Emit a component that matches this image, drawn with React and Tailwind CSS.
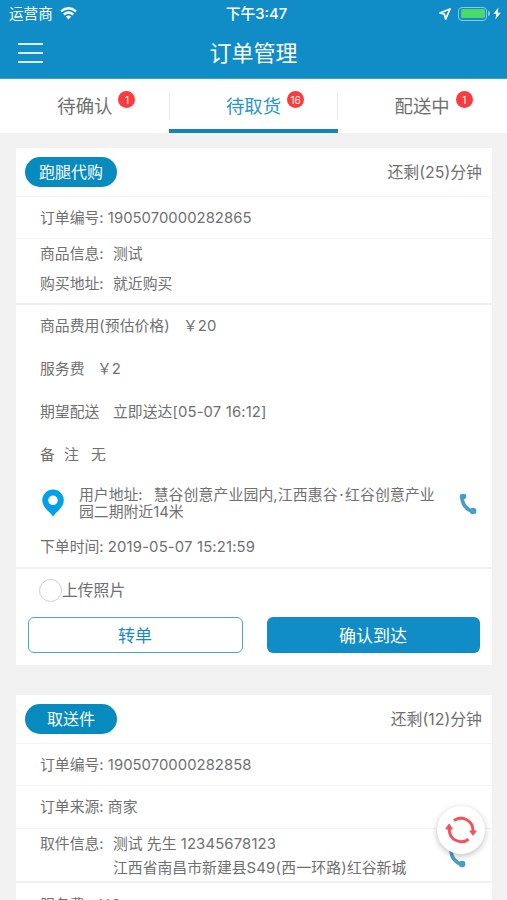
import React from "react";

const PhoneIcon = ({ className = "" }) => (
  <svg className={className} width="18" height="22" viewBox="0 0 18 22" fill="none">
    <path d="M3 4.5C3.3 11 7 16 13.5 18.6" stroke="#4a9dc4" strokeWidth="3.8" />
    <rect x=".8" y=".8" width="6.4" height="5.4" rx="2" transform="rotate(-6 4 3.5)" fill="#4a9dc4" />
    <circle cx="14.1" cy="18" r="3.3" fill="#4a9dc4" />
    <path d="M9.6 18 14 21.3 15 18Z" fill="#4a9dc4" />
  </svg>
);

const Tab = ({ label, count, active }) => (
  <div
    className={
      "relative flex flex-1 items-center justify-center border-b-4 pt-[5px] " +
      (active ? "border-[#1684b7] text-[#2b96c9]" : "border-transparent")
    }
  >
    <span className="relative text-[18.4px]">
      {label}
      <span className="absolute -right-[23px] -top-[6px] flex h-[17px] w-[17px] items-center justify-center rounded-full bg-[#fb3b3e] text-[10px] text-white">
        {count}
      </span>
    </span>
  </div>
);

const Head = ({ title, minutes }) => (
  <div className="flex h-[49px] items-center justify-between border-b border-[#f4f4f4] pl-[9px] pr-[10px]">
    <span className="flex h-[30px] w-[92px] items-center justify-center rounded-full bg-[#078bbf] text-[16px] text-white">
      {title}
    </span>
    <span className="pt-px text-[15.9px]">还剩({minutes})分钟</span>
  </div>
);

const Row = ({ className = "", children }) => (
  <div className={"flex items-center whitespace-pre pl-6 pt-px " + className}>{children}</div>
);

export default function App() {
  return (
    <div className="relative flex h-[900px] w-[507px] flex-col overflow-hidden bg-[#f2f2f2] font-['Inter','Noto_Sans_CJK_SC',sans-serif] text-[14.85px] font-normal leading-none text-[#707070]">
      <header className="h-[79px] shrink-0 border-b border-[#3ba0cf] bg-[#108cc6] text-white">
        <div className="grid h-[27px] grid-cols-3 items-center">
          <div className="flex items-center gap-[7px] pl-[9px] pt-px text-[14.6px]">
            运营商
            <svg className="-mt-px" width="17" height="13" viewBox="0 0 17 13" fill="none" stroke="white" strokeWidth="2.3">
              <path d="M1 4.4Q8.5-1.9 16 4.4" />
              <path d="M3.8 7.5Q8.5 3.5 13.2 7.5" />
              <path d="M8.5 12.4 5.8 9.5Q8.5 7.4 11.2 9.5Z" fill="white" stroke="none" />
            </svg>
          </div>
          <div className="pl-[6px] pt-[2px] text-center text-[14.8px] font-medium">下午3:47</div>
          <div className="flex items-center justify-end pr-[6px]">
            <svg width="12" height="12" viewBox="0 0 12 12" fill="none" stroke="white" strokeWidth="1.8" strokeLinejoin="round">
              <path d="M1 5 11 1 6.7 11 5.4 6.2Z" />
            </svg>
            <span className="ml-[7px] h-[14px] w-[29px] rounded-[4px] border border-[#8bc9e5] p-[1.5px]">
              <span className="block h-full rounded-[1.5px] bg-[#4cd964]" />
            </span>
            <span className="ml-[1px] h-[5px] w-[2px] rounded-r bg-[#8bc9e5]" />
            <svg className="ml-[3px]" width="8" height="13" viewBox="0 0 8 13" fill="white">
              <path d="M5.4.5.3 7h3L2.4 12.5 7.8 5.7H4.7Z" />
            </svg>
          </div>
        </div>
        <div className="grid h-[51px] grid-cols-3 items-center">
          <div className="ml-[18px] flex w-[25px] flex-col gap-[7px]">
            <span className="h-[2px] bg-white/85" />
            <span className="h-[2px] bg-white/85" />
            <span className="h-[2px] bg-white/85" />
          </div>
          <div className="text-center text-[22px]">订单管理</div>
        </div>
      </header>

      <nav className="flex h-[54px] shrink-0 bg-white">
        <Tab label="待确认" count="1" />
        <span className="-mx-px mt-[13px] h-[28px] w-px bg-[#ededed]" />
        <Tab label="待取货" count="16" active />
        <span className="-mx-px mt-[13px] h-[28px] w-px bg-[#ededed]" />
        <Tab label="配送中" count="1" />
      </nav>

      <main className="mt-[15px] flex flex-col gap-[30px] pl-4 pr-[15px]">
        <section className="h-[517px] shrink-0 bg-white">
          <Head title="跑腿代购" minutes="25" />
          <Row className="h-[42px] border-b border-[#f4f4f4]">订单编号: <span className="tracking-[0.04px]">1905070000282865</span></Row>
          <div className="flex h-[66px] flex-col border-b-2 border-[#f0f0f0]">
            <Row className="h-[30px]">
              <span className="w-[73px]">商品信息:</span>测试
            </Row>
            <Row className="h-[30px]">
              <span className="w-[73px]">购买地址:</span>就近购买
            </Row>
          </div>
          <Row className="h-[42px]">
            <span className="w-[143px]">商品费用(预估价格)</span>￥20
          </Row>
          <Row className="h-[43px]">
            <span className="w-[57px]">服务费</span>￥2
          </Row>
          <Row className="h-[43px]">
            <span className="w-[73px]">期望配送</span>
            <span>立即送达<span className="tracking-[0.15px]">[05-07 16:12]</span></span>
          </Row>
          <Row className="h-[43px]">
            <span className="w-6">备</span>
            <span className="w-[27px]">注</span>无
          </Row>
          <div className="flex h-[56px] items-center pl-[26px] pr-[15px]">
            <svg className="-mt-[2px]" width="22" height="28" viewBox="0 0 22 28">
              <path fillRule="evenodd" fill="#02a0e9" d="M11 .5A10.8 10.8 0 0 0 .2 11.3C.2 18.4 7.6 22.7 11 27.4 14.4 22.7 21.8 18.4 21.8 11.3A10.8 10.8 0 0 0 11 .5Zm0 6a4.8 4.8 0 1 1 0 9.6 4.8 4.8 0 0 1 0-9.6Z" />
            </svg>
            <p className="ml-[15px] flex-1 whitespace-pre leading-[17px]">
              用户地址:<span className="ml-[11px] tracking-[0.12px]">慧谷创意产业园内,江西惠谷<span className="mx-[1.5px]">·</span>红谷创意产业</span>
              {"\n"}园二期附近14米
            </p>
            <PhoneIcon className="-mt-px" />
          </div>
          <Row className="h-[37px] border-b-2 border-[#f2f2f2] pb-[6px]">下单时间: <span className="tracking-[0.16px]">2019-05-07 15:21:59</span></Row>
          <div className="flex h-[42px] items-center pl-[23px] text-[15.8px]">
            <span className="h-[23px] w-[23px] rounded-full border-[1.5px] border-[#cfcfcf]" />
            <span className="pt-px">上传照片</span>
          </div>
          <div className="mt-[6px] flex gap-6 pl-[11.5px] pr-[12.5px] text-[17px]">
            <div className="flex h-[36px] flex-1 items-center justify-center rounded-[6px] border-[1.5px] border-[#48a4d0] pt-[2px] text-[#168bc2]">转单</div>
            <div className="flex h-[36px] flex-1 items-center justify-center rounded-[6px] bg-[#108cc6] pt-[2px] text-white">确认到达</div>
          </div>
        </section>

        <section className="shrink-0 bg-white">
          <Head title="取送件" minutes="12" />
          <Row className="h-[42px] border-b border-[#f4f4f4]">订单编号: <span className="tracking-[0.04px]">1905070000282858</span></Row>
          <Row className="h-[43px] border-b border-[#f4f4f4]">订单来源: 商家</Row>
          <div className="relative flex h-[54px] border-b-2 border-[#f0f0f0] pl-6 pt-[3px] leading-6">
            <span className="w-[73px]">取件信息:</span>
            <p className="whitespace-pre">
              测试 先生 <span className="tracking-[0.15px]">12345678123</span>{"\n"}江西省南昌市新建县<span className="tracking-[0.2px]">S49(西一环路)</span>红谷新城
            </p>
            <PhoneIcon className="absolute right-[26px] top-[17px]" />
          </div>
          <Row className="h-[43px]">
            <span className="w-[57px]">服务费</span>￥2
          </Row>
        </section>
      </main>

      <div className="absolute left-[437px] top-[806px] flex h-[48px] w-[48px] items-center justify-center rounded-full bg-white shadow-[0_2px_6px_rgba(0,0,0,0.25)]">
        <svg width="32" height="28" viewBox="0 0 32 28" fill="none" stroke="#f4525a" strokeWidth="3">
          <path d="M8.9 4.6A12 12 0 0 1 28 14V16" />
          <path d="M23.6 23.2A12 12 0 0 1 4.3 14V12" />
          <path d="M25 15H31L28 19Z M1 12.8H7.2L4.1 8.4Z" fill="#f4525a" strokeWidth="1.2" strokeLinejoin="round" />
        </svg>
      </div>
    </div>
  );
}
